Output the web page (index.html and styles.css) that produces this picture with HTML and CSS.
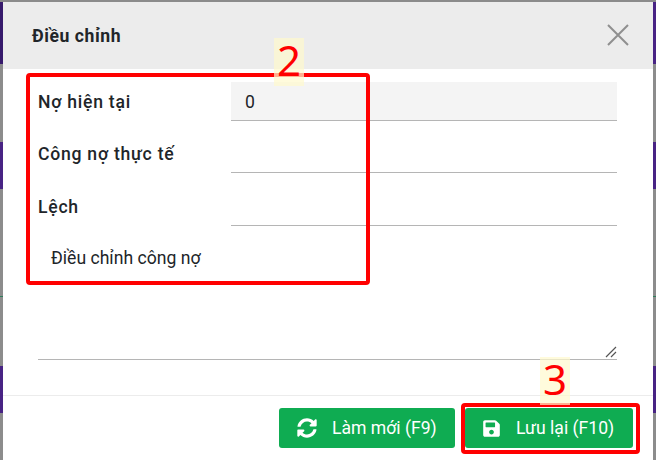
FILE: index.html
```html
<!DOCTYPE html>
<html lang="vi">
<head>
<meta charset="utf-8">
<title>Điều chỉnh</title>
<link rel="stylesheet" href="styles.css">
</head>
<body>
<div class="page">
  <div class="strip">
    <div class="seg purple-dark h62"></div><div class="seg gray h78"></div><div class="seg purple h47"></div><div class="seg gray h107"></div><div class="seg green h1"></div><div class="seg gray h69"></div><div class="seg purple h47"></div><div class="seg gray grow"></div>
  </div>
  <main class="modal">
    <header class="modal-head">
      <h1 class="modal-title">Điều chỉnh</h1>
      <svg class="close" width="24" height="24" viewBox="0 0 24 24"><path d="M2 2 L22 22 M22 2 L2 22" stroke="#8f8f8f" stroke-width="2" fill="none"/></svg>
    </header>
    <section class="modal-body">
      <div class="row">
        <label class="label">Nợ hiện tại</label>
        <div class="field readonly">0</div>
      </div>
      <div class="row">
        <label class="label">Công nợ thực tế</label>
        <div class="field"></div>
      </div>
      <div class="row">
        <label class="label">Lệch</label>
        <div class="field"></div>
      </div>
      <div class="note-label">Điều chỉnh công nợ</div>
      <div class="textarea">
        <svg class="grip" width="12" height="12" viewBox="0 0 12 12"><path d="M1 11 L11 1 M6 11 L11 6" stroke="#555" stroke-width="1.2" fill="none"/></svg>
      </div>
    </section>
    <footer class="modal-foot">
      <button class="btn btn-reset">
        <svg class="ico" width="20" height="20" viewBox="0 0 512 512"><path fill="#fff" d="M370.72 133.28C339.458 104.008 298.888 87.962 255.848 88c-77.458.068-144.328 53.178-162.791 126.85-1.344 5.363-6.122 9.15-11.651 9.15H24.103c-7.498 0-13.194-6.807-11.807-14.176C33.933 94.924 134.813 8 256 8c66.448 0 126.791 26.136 171.315 68.685L463.03 40.97C478.149 25.851 504 36.559 504 57.941V192c0 13.255-10.745 24-24 24H345.941c-21.382 0-32.09-25.851-16.971-40.971l41.75-41.749zM32 296h134.059c21.382 0 32.09 25.851 16.971 40.971l-41.75 41.75c31.262 29.273 71.835 45.319 114.876 45.28 77.418-.07 144.315-53.144 162.787-126.849 1.344-5.363 6.122-9.15 11.651-9.15h57.304c7.498 0 13.194 6.807 11.807 14.176C478.067 417.076 377.187 504 256 504c-66.448 0-126.791-26.136-171.315-68.685L48.97 471.03C33.851 486.149 8 475.441 8 454.059V320c0-13.255 10.745-24 24-24z"/></svg>
        <span>Làm mới (F9)</span>
      </button>
      <button class="btn btn-save">
        <svg class="ico" width="17" height="19" viewBox="0 0 448 512"><path fill="#fff" d="M433.941 129.941l-83.882-83.882A48 48 0 0 0 316.118 32H48C21.49 32 0 53.49 0 80v352c0 26.51 21.49 48 48 48h352c26.51 0 48-21.49 48-48V163.882a48 48 0 0 0-14.059-33.941zM224 416c-35.346 0-64-28.654-64-64 0-35.346 28.654-64 64-64s64 28.654 64 64c0 35.346-28.654 64-64 64zm96-304.52V212c0 6.627-5.373 12-12 12H76c-6.627 0-12-5.373-12-12V108c0-6.627 5.373-12 12-12h228.52c3.183 0 6.235 1.264 8.485 3.515l3.48 3.48A11.996 11.996 0 0 1 320 111.48z"/></svg>
        <span>Lưu lại (F10)</span>
      </button>
    </footer>
  </main>
  <div class="strip">
    <div class="seg purple h62"></div><div class="seg gray h78"></div><div class="seg purple h47"></div><div class="seg gray h107"></div><div class="seg green h1"></div><div class="seg gray h69"></div><div class="seg purple h47"></div><div class="seg gray grow"></div>
  </div>
  <div class="mark mark-form"></div>
  <div class="mark mark-save"></div>
  <div class="tag tag-2">2</div>
  <div class="tag tag-3">3</div>
</div>
</body>
</html>
```
FILE: styles.css
```css
* { box-sizing: border-box; }
html, body { margin: 0; height: 100%; background: #fff; }
.page {
  position: relative;
  width: 656px;
  height: 460px;
  overflow: hidden;
  display: flex;
  padding-top: 2px;
  background: #8b8b8b;
  font-family: Roboto, "Liberation Sans", sans-serif;
  color: #212529;
}
.strip { width: 3px; display: flex; flex-direction: column; flex: none; }
.seg.purple { background: #482384; }
.seg.purple-dark { background: #371a6c; }
.seg.gray { background: #8c8c8c; }
.seg.green { background: #2f7d5a; }
.h1 { height: 1px; }
.h62 { height: 62px; }
.h69 { height: 69px; }
.h78 { height: 78px; }
.h47 { height: 47px; }
.h107 { height: 107px; }
.grow { flex: 1; }
.modal { flex: 1; background: #fff; display: flex; flex-direction: column; }
.modal-head {
  height: 67px;
  flex: none;
  background: #ececec;
  display: flex;
  align-items: center;
  justify-content: space-between;
  padding: 0 23px 0 29px;
}
.modal-title { margin: 0; font-size: 17.6px; font-weight: 700; line-height: 20px; letter-spacing: 0.55px; }
.close { position: relative; top: -1px; }
.modal-body { flex: 1; padding: 13px 36px 0 35px; display: flex; flex-direction: column; }
.row { display: flex; height: 39px; margin-bottom: 13px; }
.row:nth-child(2) { margin-bottom: 14px; }
.label { width: 193px; font-size: 17.6px; font-weight: 500; line-height: 41px; flex: none; letter-spacing: 0.75px; }
.field { flex: 1; border-bottom: 1px solid #b5b5b5; font-size: 17.6px; line-height: 40px; padding-left: 14px; }
.readonly { background: #f4f4f4; }
.note-label { font-size: 17.6px; line-height: 20px; padding-left: 13px; margin-top: 9px; }
.textarea { position: relative; height: 92px; border-bottom: 1px solid #b5b5b5; }
.grip { position: absolute; right: 0; bottom: 1px; }
.modal-foot {
  height: 65px;
  flex: none;
  border-top: 1px solid #ececec;
  display: flex;
  justify-content: flex-end;
  gap: 10px;
  padding: 12px 20px 0 0;
}
.btn {
  height: 40px;
  border: 0;
  border-radius: 3px;
  background: #0fac52;
  color: #fff;
  font: 400 17.6px Roboto, "Liberation Sans", sans-serif;
  display: flex;
  align-items: center;
}
.btn-reset { width: 176px; padding-left: 18px; gap: 15px; }
.btn-save { width: 168px; padding-left: 18px; gap: 16px; }
.mark { position: absolute; border: 4px solid #ff0000; border-radius: 4px; }
.mark-form { left: 26px; top: 73px; width: 344px; height: 212px; }
.mark-save { left: 461px; top: 403px; width: 179px; height: 51px; }
.tag {
  position: absolute;
  width: 30px;
  background: rgba(255, 250, 205, 0.7);
  color: #ff0000;
  font: 400 42px/43px "Noto Sans", sans-serif;
  text-align: center;
}
.tag-2 { left: 274px; top: 38px; height: 48px; }
.tag-3 { left: 540px; top: 357px; height: 48px; }
```
